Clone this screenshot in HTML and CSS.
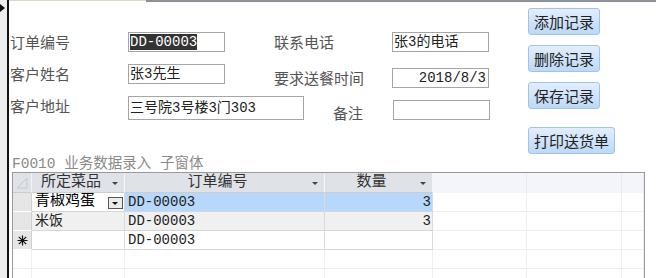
FILE: index.html
```html
<!DOCTYPE html>
<html lang="zh-CN">
<head>
  <meta charset="UTF-8">
  <title>F0010 业务数据录入</title>
  <link rel="stylesheet" href="styles.css">
</head>
<body>

<div class="window">
  <!-- Record selector strip -->
  <div class="record-bar">
    <span class="record-arrow"></span>
  </div>

  <div class="form">
    <div class="top-line">
      <span class="top-line-light"></span>
      <span class="top-line-dark"></span>
    </div>

    <div class="header-area">
      <!-- Main fields -->
      <div class="fields">
        <div class="field-row">
          <label class="lbl">订单编号</label>
          <div class="box box-short"><span class="selected">DD-00003</span></div>
          <label class="lbl lbl-right">联系电话</label>
          <div class="box box-short box-far">张3的电话</div>
        </div>
        <div class="field-row">
          <label class="lbl">客户姓名</label>
          <div class="box box-short">张3先生</div>
          <label class="lbl lbl-right shift">要求送餐时间</label>
          <div class="box box-short box-far shift num">2018/8/3</div>
        </div>
        <div class="field-row">
          <label class="lbl">客户地址</label>
          <div class="box box-long">三号院3号楼3门303</div>
          <label class="lbl lbl-note">备注</label>
          <div class="box box-short box-far shift"></div>
        </div>
      </div>

      <!-- Command buttons -->
      <div class="buttons">
        <button class="cmd">添加记录</button>
        <button class="cmd">删除记录</button>
        <button class="cmd">保存记录</button>
        <button class="cmd cmd-print">打印送货单</button>
      </div>
    </div>

    <!-- Subform -->
    <div class="subform">
      <div class="subform-title">F0010 业务数据录入 子窗体</div>
      <div class="datasheet">
        <div class="ds-row ds-head">
          <div class="cell sel"><svg width="12" height="12" viewBox="0 0 12 12"><path d="M1 11 L11 1 L11 11 Z" fill="none" stroke="#c4c8ce" stroke-width="1"/></svg></div>
          <div class="cell hd">所定菜品<i class="sort"></i></div>
          <div class="cell hd">订单编号<i class="sort"></i></div>
          <div class="cell hd">数量<i class="sort"></i></div>
          <div class="cell hd-empty"></div>
          <div class="cell hd-empty"></div>
          <div class="cell hd-empty"></div>
        </div>

        <div class="ds-row current">
          <div class="cell sel"></div>
          <div class="cell edit">青椒鸡蛋<span class="combo"><i></i></span></div>
          <div class="cell hl">DD-00003</div>
          <div class="cell hl right">3</div>
          <div class="cell blank"></div>
          <div class="cell blank"></div>
          <div class="cell blank"></div>
        </div>

        <div class="ds-row alt">
          <div class="cell sel"></div>
          <div class="cell">米饭</div>
          <div class="cell">DD-00003</div>
          <div class="cell right">3</div>
          <div class="cell blank"></div>
          <div class="cell blank"></div>
          <div class="cell blank"></div>
        </div>

        <div class="ds-row">
          <div class="cell sel"><svg width="11" height="11" viewBox="0 0 11 11"><path d="M5.5 0.5 V10.5 M0.5 5.5 H10.5 M1.8 1.8 L9.2 9.2 M9.2 1.8 L1.8 9.2" stroke="#111" stroke-width="1.2"/></svg></div>
          <div class="cell"></div>
          <div class="cell">DD-00003</div>
          <div class="cell"></div>
          <div class="cell blank"></div>
          <div class="cell blank"></div>
          <div class="cell blank"></div>
        </div>

        <div class="ds-row empty">
          <div class="cell"></div><div class="cell"></div><div class="cell"></div><div class="cell"></div>
          <div class="cell"></div><div class="cell"></div><div class="cell"></div>
        </div>
        <div class="ds-row empty">
          <div class="cell"></div><div class="cell"></div><div class="cell"></div><div class="cell"></div>
          <div class="cell"></div><div class="cell"></div><div class="cell"></div>
        </div>
      </div>
    </div>
  </div>
</div>

</body>
</html>
```

FILE: styles.css
```css
/* Page */
html, body {
  margin: 0;
  background: #fff;
  width: 656px;
  height: 278px;
  overflow: hidden;
}

body {
  font-family: "Noto Sans CJK SC", sans-serif;
  color: #222;
}

.window {
  display: flex;
  height: 278px;
}

/* Record selector strip on the left */
.record-bar {
  width: 7px;
  flex-shrink: 0;
  background: #ececec;
  border-right: 2px solid #111;
  position: relative;
}

.record-arrow {
  position: absolute;
  left: 0;
  top: 4px;
  border-left: 5px solid #111;
  border-top: 4px solid transparent;
  border-bottom: 4px solid transparent;
}

.form {
  flex: 1;
}

.top-line {
  display: flex;
  height: 2px;
}

.top-line-light {
  width: 137px;
  background: #e0d6c4;
  height: 1px;
}

.top-line-dark {
  flex: 1;
  background: #8d9096;
}

/* Header area */
.header-area {
  display: flex;
  height: 154px;
}

.fields {
  width: 519px;
  padding-top: 30px;
}

.field-row {
  display: flex;
  align-items: flex-start;
  height: 32px;
  padding-left: 1px;
}

.field-row:last-child {
  height: 24px;
}

.lbl {
  width: 118px;
  flex-shrink: 0;
  font-size: 15px;
  line-height: 20px;
  color: #555;
  white-space: nowrap;
}

.lbl-right {
  width: 88px;
  margin-left: 49px;
}

.lbl-note {
  width: 59px;
  text-align: right;
  margin-top: 7px;
}

.shift {
  margin-top: 4px;
}

.box {
  box-sizing: border-box;
  height: 20px;
  border: 1px solid #a5a5a5;
  padding-left: 1px;
  font-family: "Liberation Mono", "Noto Sans CJK SC", monospace;
  font-size: 14px;
  line-height: 18px;
  color: #222;
  white-space: nowrap;
  overflow: hidden;
  flex-shrink: 0;
}

.box-short {
  width: 97px;
}

.box-long {
  width: 176px;
  height: 24px;
  line-height: 22px;
}

.box-far {
  margin-left: 30px;
}

.num {
  text-align: right;
  padding-right: 2px;
}

.selected {
  display: inline-block;
  background: #333;
  color: #fff;
  line-height: 16px;
  margin-top: 1px;
  vertical-align: top;
}

/* Buttons */
.buttons {
  display: flex;
  flex-direction: column;
  align-items: flex-start;
  gap: 10px;
  padding-top: 6px;
}

.cmd {
  font-family: "Noto Sans CJK SC", sans-serif;
  font-size: 15px;
  line-height: 24px;
  height: 27px;
  padding: 0 5px;
  color: #222;
  background: linear-gradient(#e2eefc, #bdd9f7);
  border: 1px solid #9fc3ea;
  border-radius: 3px;
  cursor: pointer;
}

.cmd-print {
  margin-top: 8px;
}

/* Subform */
.subform {
  padding-left: 3px;
}

.subform-title {
  font-family: "Liberation Mono", "Noto Sans CJK SC", monospace;
  font-size: 14.5px;
  line-height: 16px;
  height: 16px;
  color: #8a8a8a;
  white-space: nowrap;
}

.datasheet {
  width: 633px;
  box-sizing: border-box;
  border: 1px solid #9a9a9a;
  border-bottom: none;
  font-family: "Liberation Mono", "Noto Sans CJK SC", monospace;
  font-size: 14px;
}

.ds-row {
  display: grid;
  grid-template-columns: 19px 93px 200px 108px 94px 95px 1fr;
  height: 19px;
}

.cell {
  box-sizing: border-box;
  border-right: 1px solid #dadada;
  border-bottom: 1px solid #d6d6d6;
  padding-left: 3px;
  line-height: 18px;
  white-space: nowrap;
  overflow: hidden;
  position: relative;
}

.cell.right {
  text-align: right;
  padding-right: 1px;
}

/* Header */
.ds-head {
  height: 20px;
}

.ds-head .cell {
  line-height: 19px;
}

.cell.sel {
  background: #e6e6e6;
  border-right: 1px solid #d0d0d0;
  border-bottom: 1px solid #fff;
  padding: 0;
  display: flex;
  align-items: center;
  justify-content: center;
}

.ds-head .cell.sel {
  background: #dfe2e7;
  border-bottom: 1px solid #c9ccd2;
  border-right: 1px solid #f2f3f5;
  align-items: flex-end;
  justify-content: flex-end;
  padding: 0 3px 3px 0;
}

.hd {
  background: #dfe2e7;
  border-right: 1px solid #f4f5f7;
  border-bottom: 1px solid #c9ccd2;
  text-align: center;
  padding: 0 14px 0 0;
  color: #333;
  font-size: 15px;
}

.sort {
  position: absolute;
  right: 6px;
  top: 9px;
  border-top: 3px solid #444;
  border-left: 3px solid transparent;
  border-right: 3px solid transparent;
}

.hd-empty {
  background: #f3f5fb;
  border-right: 1px solid #e8eaf0;
  border-bottom: 1px solid #f3f5fb;
}

/* Data rows */
.current .hl {
  background: #b7d8fb;
}

.edit {
  background: #fff;
  color: #000;
  font-size: 15px;
}

.combo {
  position: absolute;
  right: 1px;
  top: 4px;
  width: 13px;
  height: 10px;
  background: #ececec;
  border: 1px solid #555;
}

.combo i {
  position: absolute;
  left: 3px;
  top: 4px;
  border-top: 3px solid #111;
  border-left: 3px solid transparent;
  border-right: 3px solid transparent;
}

.alt .cell {
  background: #f0f0f0;
}

.alt .cell.sel {
  background: #e6e6e6;
}

.cell.blank,
.alt .cell.blank {
  background: #fff;
  border-right: 1px solid #f0f0f0;
  border-bottom: 1px solid #eeeeee;
}

.empty .cell {
  background: #fff;
  border-right: 1px solid #f0f0f0;
  border-bottom: 1px solid #eeeeee;
}
```
